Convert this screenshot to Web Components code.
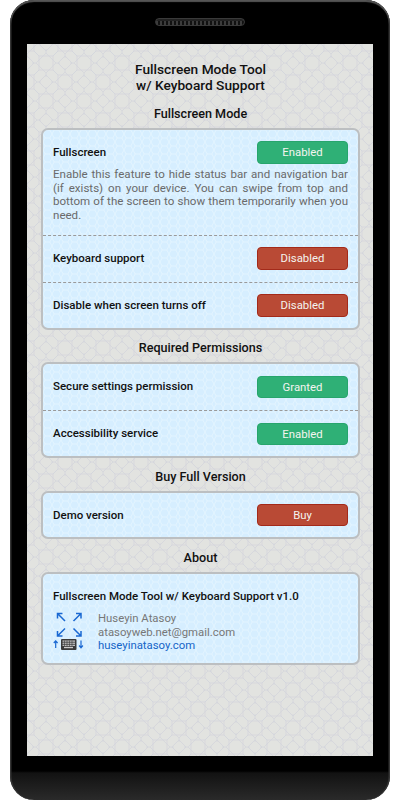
<!DOCTYPE html>
<html><head><meta charset="utf-8">
<style>
html,body{margin:0;padding:0;background:#fff;font-family:Roboto,"Liberation Sans",sans-serif}
</style></head><body>
<template id="t-phone"><style>
:host{display:block;width:380px;height:800px;margin:0 10px;box-sizing:border-box;position:relative;overflow:hidden;
 background:linear-gradient(#000 0,#000 771px,#121212 773px,#2a2a2a 800px);border-radius:24px;
 padding:44px 17px 0;box-shadow:inset 0 2px 1px #555,inset 1.5px 0 0 #333,inset -1.5px 0 0 #333}
.sp{position:absolute;left:145px;top:18px;width:90px;height:8px;border-radius:4px;box-sizing:border-box;border:1px solid #3a3a3a;
 background:linear-gradient(#222 0 2px,transparent 2px),repeating-linear-gradient(90deg,#3c3c3c 0 2px,#111 2px 4px)}
.screen{width:346px;height:712px;box-sizing:border-box;padding:17px 13px 0 14px;background-color:#e2e3e0;color:#111;background-image:var(--pat)}
</style><div class="sp"></div><div class="screen"><slot></slot></div></template>

<template id="t-title"><style>
:host{display:block;text-align:center;font:500 13.7px/16px Roboto,sans-serif;color:#111;margin-bottom:13px}
</style><slot></slot></template>

<template id="t-section"><style>
:host{display:block;text-align:center;font:500 12.6px/16px Roboto,sans-serif;color:#111;margin:0 0 6px}
</style><slot></slot></template>

<template id="t-card"><style>
:host{display:block;box-sizing:border-box;width:319px;background-color:#d6eeff;background-image:var(--pat2);border:2px solid #bcbfc1;border-radius:7px;margin-bottom:10.8px}
::slotted(setting-row:not(:last-child)){border-bottom:1px dashed #9a9a9a}
</style><slot></slot></template>

<template id="t-row"><style>
:host{display:block;padding:11.2px 10px 12.2px}
:host(:last-child){padding-bottom:10.7px}
.h{display:flex;justify-content:space-between;align-items:center;height:22.6px;font:500 11.5px/20px Roboto,sans-serif;color:#111}
#l{padding-bottom:1px}
.d{font:400 11.55px/13.8px Roboto,sans-serif;color:#6a6a6a;text-align:justify}
::slotted([slot=desc]){display:block;margin-top:4px}
</style><div class="h"><span id="l"></span><slot name="btn"></slot></div><div class="d"><slot name="desc"></slot></div></template>

<template id="t-btn"><style>
:host{display:block;width:91px;height:22.6px;box-sizing:border-box;border-radius:4px;text-align:center;font:400 11.35px/20.6px Roboto,sans-serif;color:#f4f4f0}
:host([tone=ok]){background:#2fb076;border:1px solid #27a56c}
:host([tone=bad]){background:#b94a35;border:1px solid #a32a1a}
</style><slot></slot></template>

<template id="t-about"><style>
:host{display:block;padding:14px 10px 11px}
.t{font:500 11.5px/16px Roboto,sans-serif;color:#111;margin-bottom:8.6px;white-space:nowrap}
.r{display:flex;gap:12px;align-items:flex-start}
svg{display:block;flex:none;width:33px;height:42px;margin-top:-2px}
.i{font:400 11.35px/13.3px Roboto,sans-serif;color:#777}
</style><div class="t"><slot name="name"></slot></div>
<div class="r"><svg viewBox="0 0 33 42" fill="none">
<g stroke="#1a68d2" stroke-width="1.5">
<path d="M4.5 3.5L12 11M4.5 8.5V3.5H9.5"/>
<path d="M28 3.5L20.5 11M28 8.5V3.5H23"/>
<path d="M4.5 26L12 18.5M4.5 21V26H9.5"/>
<path d="M28 26L20.5 18.5M28 21V26H23"/>
<path stroke-width="1.2" d="M2.7 38V31M.8 33L2.7 30.8L4.6 33"/>
<path stroke-width="1.2" d="M28 30.5V37.5M26.1 35.5L28 37.8L29.9 35.5"/>
</g>
<rect x="8" y="29" width="15.5" height="11" rx="1" fill="#3a3a3a"/>
<g fill="#ccc"><rect x="9.5" y="30.5" width="12.5" height="1.2"/><rect x="9.5" y="32.6" width="12.5" height="1.2"/><rect x="9.5" y="34.7" width="12.5" height="1.2"/><rect x="11" y="36.8" width="9" height="1.4"/></g>
<g stroke="#3a3a3a" stroke-width=".6"><path d="M11.5 30.5v6M14 30.5v6M16.5 30.5v6M19 30.5v6"/></g>
</svg>
<div class="i"><slot></slot></div></div></template>

<phone-frame>
<page-title>Fullscreen Mode Tool<br>w/ Keyboard Support</page-title>
<section-title>Fullscreen Mode</section-title>
<info-card>
<setting-row label="Fullscreen"><status-button slot="btn" tone="ok">Enabled</status-button><span slot="desc">Enable this feature to hide status bar and navigation bar (if exists) on your device. You can swipe from top and bottom of the screen to show them temporarily when you need.</span></setting-row>
<setting-row label="Keyboard support"><status-button slot="btn" tone="bad">Disabled</status-button></setting-row>
<setting-row label="Disable when screen turns off"><status-button slot="btn" tone="bad">Disabled</status-button></setting-row>
</info-card>
<section-title>Required Permissions</section-title>
<info-card>
<setting-row label="Secure settings permission"><status-button slot="btn" tone="ok">Granted</status-button></setting-row>
<setting-row label="Accessibility service"><status-button slot="btn" tone="ok">Enabled</status-button></setting-row>
</info-card>
<section-title>Buy Full Version</section-title>
<info-card>
<setting-row label="Demo version"><status-button slot="btn" tone="bad">Buy</status-button></setting-row>
</info-card>
<section-title>About</section-title>
<info-card>
<about-block><span slot="name">Fullscreen Mode Tool w/ Keyboard Support v1.0</span>Huseyin Atasoy<br>atasoyweb.net@gmail.com<br><a href="#" style="color:#1565c8;text-decoration:none">huseyinatasoy.com</a></about-block>
</info-card>
</phone-frame>
<script>
function lattice(col,w){
 var s=38,c=19,d=7;
 function sq(x,y,h,rot){return '<rect x="'+(x-h)+'" y="'+(y-h)+'" width="'+2*h+'" height="'+2*h+'" transform="rotate('+rot+' '+x+' '+y+')"/>';}
 var b='';
 [[c,c],[0,0],[s,0],[0,s],[s,s]].forEach(function(q){b+=sq(q[0],q[1],d,0)+sq(q[0],q[1],d,45);});
 [[c,0],[0,c],[s,c],[c,s]].forEach(function(q){b+=sq(q[0],q[1],5,45);});
 var e=d*1.414,l='';
 [[c,c],[0,0],[s,0],[0,s],[s,s]].forEach(function(q){[[1,1],[1,-1],[-1,1],[-1,-1]].forEach(function(v){l+='M'+(q[0]+v[0]*d)+' '+(q[1]+v[1]*d)+'L'+(q[0]+v[0]*(c-d))+' '+(q[1]+v[1]*(c-d));});l+='M'+(q[0]-e)+' '+q[1]+'H'+(q[0]-c+5)+'M'+(q[0]+e)+' '+q[1]+'H'+(q[0]+c-5)+'M'+q[0]+' '+(q[1]-e)+'V'+(q[1]-c+5)+'M'+q[0]+' '+(q[1]+e)+'V'+(q[1]+c-5);});
 var svg='<svg xmlns="http://www.w3.org/2000/svg" width="'+s+'" height="'+s+'"><g fill="none" stroke="'+col+'" stroke-width="'+w+'">'+b+'<path d="'+l+'"/></g></svg>';
 return 'url("data:image/svg+xml,'+encodeURIComponent(svg)+'")';
}
function mesh(col){
 var svg='<svg xmlns="http://www.w3.org/2000/svg" width="9" height="8"><path fill="none" stroke="'+col+'" stroke-width=".7" d="M0 4L2.2 0H6.8L9 4L6.8 8H2.2Z"/></svg>';
 return 'url("data:image/svg+xml,'+encodeURIComponent(svg)+'")';
}
document.documentElement.style.setProperty('--pat',lattice('#d3d5dc',.8));
document.documentElement.style.setProperty('--pat2',mesh('#e8f6ff'));
function def(n,id,init){customElements.define(n,class extends HTMLElement{constructor(){super();this.attachShadow({mode:'open'}).appendChild(document.getElementById(id).content.cloneNode(true));}connectedCallback(){if(init)init(this);}});}
def('phone-frame','t-phone');def('page-title','t-title');def('section-title','t-section');def('info-card','t-card');
def('setting-row','t-row',function(e){e.shadowRoot.getElementById('l').textContent=e.getAttribute('label');});
def('status-button','t-btn');def('about-block','t-about');
</script>
</body></html>
